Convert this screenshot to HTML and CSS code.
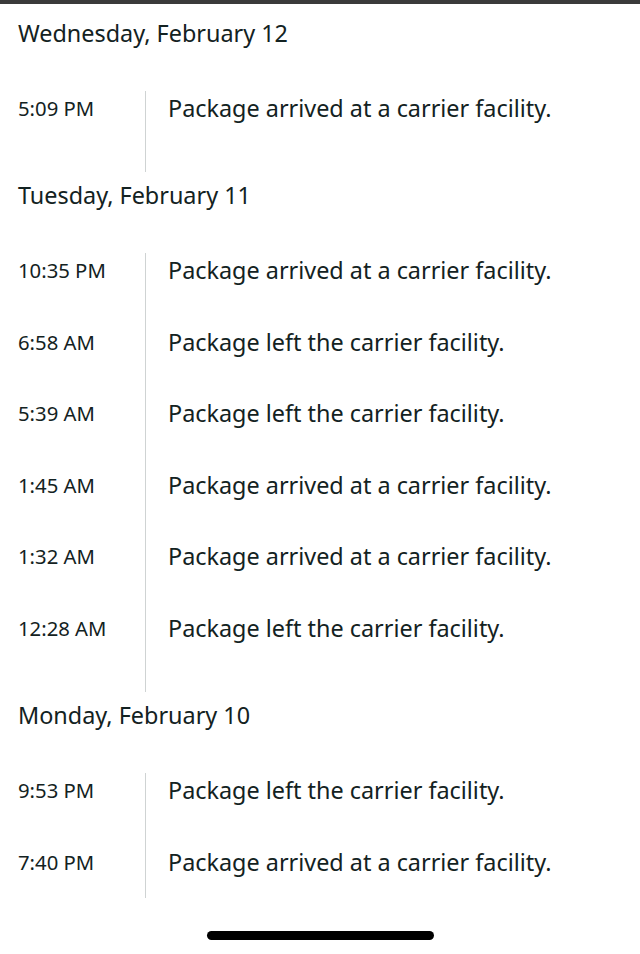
FILE: index.html
```html
<!DOCTYPE html>
<html lang="en">
<head>
<meta charset="utf-8">
<title>Tracking</title>
<link rel="stylesheet" href="styles.css">
</head>
<body>
<div class="status-bar"></div>
<main class="tracking">
  <section class="day">
    <h2 class="day-title first">Wednesday, February 12</h2>
    <ul class="events">
      <li class="event"><span class="time">5:09 PM</span><span class="desc">Package arrived at a carrier facility.</span></li>
    </ul>
  </section>
  <section class="day">
    <h2 class="day-title">Tuesday, February 11</h2>
    <ul class="events">
      <li class="event"><span class="time">10:35 PM</span><span class="desc">Package arrived at a carrier facility.</span></li>
      <li class="event"><span class="time">6:58 AM</span><span class="desc">Package left the carrier facility.</span></li>
      <li class="event"><span class="time">5:39 AM</span><span class="desc">Package left the carrier facility.</span></li>
      <li class="event"><span class="time">1:45 AM</span><span class="desc">Package arrived at a carrier facility.</span></li>
      <li class="event"><span class="time">1:32 AM</span><span class="desc">Package arrived at a carrier facility.</span></li>
      <li class="event"><span class="time">12:28 AM</span><span class="desc">Package left the carrier facility.</span></li>
    </ul>
  </section>
  <section class="day">
    <h2 class="day-title">Monday, February 10</h2>
    <ul class="events">
      <li class="event"><span class="time">9:53 PM</span><span class="desc">Package left the carrier facility.</span></li>
      <li class="event"><span class="time">7:40 PM</span><span class="desc">Package arrived at a carrier facility.</span></li>
    </ul>
  </section>
</main>
<div class="home-area"><span class="home-indicator"></span></div>
</body>
</html>
```
FILE: styles.css
```css
html, body {
  margin: 0;
  padding: 0;
  background: #ffffff;
}
body {
  font-family: "Noto Sans", "Liberation Sans", sans-serif;
  color: #132222;
  overflow: hidden;
}
.status-bar {
  height: 4px;
  background: #3a3a3a;
}
.tracking {
  padding-left: 18px;
}
.day-title {
  margin: 0;
  padding: 10px 0 45px;
  font-size: 23.4px;
  line-height: 26px;
  font-weight: 400;
}
.day-title.first {
  padding-top: 16px;
}
.events {
  list-style: none;
  margin: 0;
  padding: 0;
}
.event {
  display: flex;
  align-items: baseline;
  height: 71.6px;
}
.event:last-child {
  height: 81px;
}
.time {
  width: 127px;
  flex: none;
  font-size: 20.3px;
  line-height: 34px;
}
.desc {
  flex: 1;
  align-self: stretch;
  border-left: 1.5px solid #cfd3d3;
  padding-left: 22px;
  font-size: 23.4px;
  line-height: 34px;
}
.home-area {
  position: fixed;
  left: 0;
  right: 0;
  top: 898px;
  bottom: 0;
  background: #ffffff;
}
.home-indicator {
  position: absolute;
  left: 207px;
  top: 33px;
  width: 227px;
  height: 9px;
  border-radius: 5px;
  background: #000000;
}
```
